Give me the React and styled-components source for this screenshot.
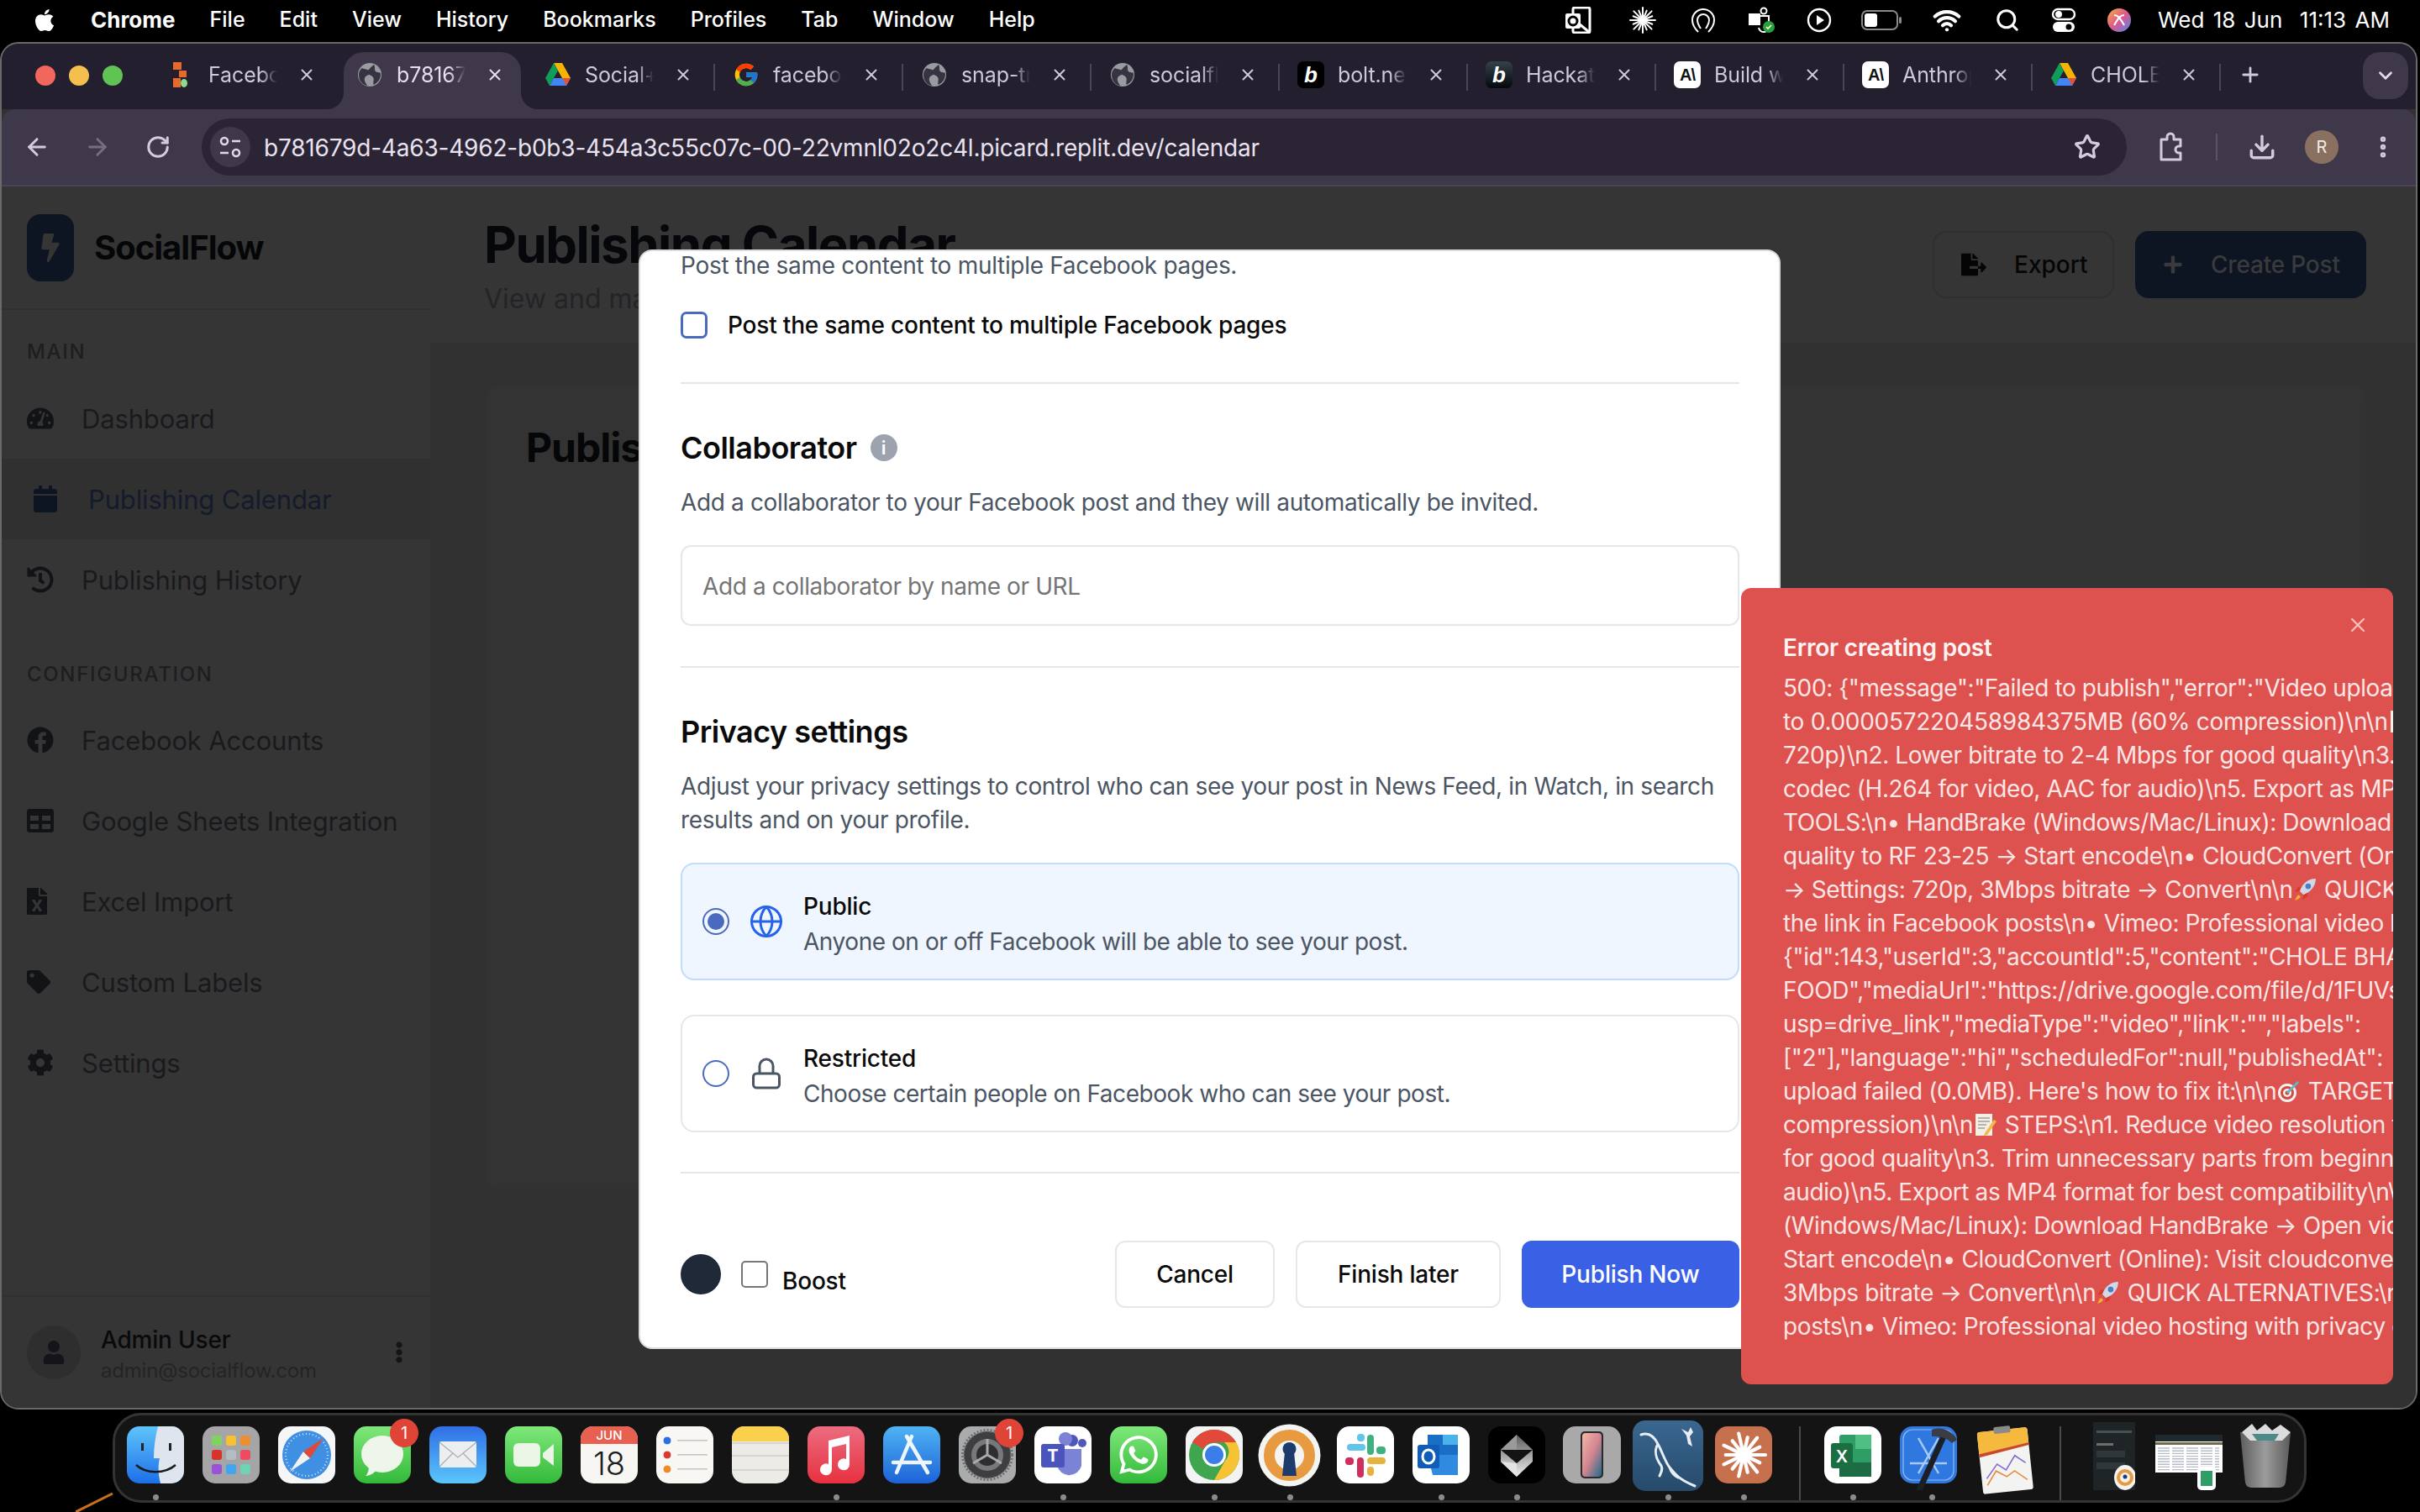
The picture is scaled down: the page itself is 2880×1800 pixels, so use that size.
import React from "react";
import styled, { createGlobalStyle } from "styled-components";
import {
  FaTachometerAlt, FaCalendar, FaHistory, FaFacebook, FaTable, FaFileExcel, FaTag, FaCog,
  FaUser, FaEllipsisV, FaFileExport, FaPlus, FaBolt, FaApple, FaWhatsapp,
} from "react-icons/fa";
import { FcGoogle } from "react-icons/fc";
import { Globe, X, Star, ArrowLeft, ArrowRight, RotateCw, EllipsisVertical, ChevronDown, Plus, Download, Search, Wifi } from "lucide-react";

const Global = createGlobalStyle`
  html, body { margin: 0; padding: 0; background: #000; }
  body { width: 2880px; height: 1800px; overflow: hidden; font-family: Inter, "Noto Sans", sans-serif; }
  * { box-sizing: border-box; }
`;

const Desktop = styled.div`
  position: relative; width: 2880px; height: 1800px; background: #000; display: flex; flex-direction: column; overflow: hidden;
`;

/* ---------- macOS menu bar ---------- */
const MenuBar = styled.div`
  height: 50px; flex: none; display: flex; align-items: center; padding: 0 37px 3px 38px; color: #fff; font-size: 25px; font-weight: 500;
`;
const AppleSlot = styled.div` width: 70px; flex: none; display: flex; align-items: center; `;
const MenuItems = styled.div` display: flex; gap: 41px; `;
const MenuItem = styled.span` font-weight: ${p => (p.$bold ? 700 : 500)}; font-size: ${p => (p.$bold ? 26 : 25)}px; white-space: nowrap; `;
const StatusArea = styled.div` margin-left: auto; display: flex; align-items: center; height: 100%; `;
const StatusCell = styled.div` width: ${p => p.$w}px; flex: none; display: flex; align-items: center; justify-content: center; `;
const Clock = styled.span` margin-left: 13px; width: 275px; white-space: pre; text-align: right; font-size: 26px; font-weight: 400; word-spacing: 3px; `;

/* ---------- Chrome window ---------- */
const Window = styled.div`
  position: relative; width: 2877px; height: 1628px; flex: none; border: 2px solid #6a6a6a; border-radius: 22px; overflow: hidden; background: #313131; display: flex; flex-direction: column;
`;
const TabStrip = styled.div` height: 78px; flex: none; background: #231f2f; display: flex; align-items: stretch; padding-left: 40px; `;
const Lights = styled.div` width: 135px; flex: none; display: flex; gap: 16px; padding-top: 26px; `;
const Light = styled.span` width: 24px; height: 24px; border-radius: 50%; background: ${p => p.$c}; `;
const TabCell = styled.div`
  position: relative; width: 224px; flex: none; display: flex; align-items: center; padding: 0 0 4px 23px; height: 78px; color: ${p => (p.$active ? "#e6e0ec" : "#cfc8d8")}; font-size: 25px; letter-spacing: -0.1px;
  &::before { content: ""; display: ${p => (p.$sep ? "block" : "none")}; position: absolute; left: 0; top: 24px; height: 32px; width: 2px; background: #4a4455; }
  ${p => p.$active && `
    &::after { content: ""; position: absolute; z-index: 0; left: 8px; right: 5px; top: 10px; bottom: 0; background: #3e384a; border-radius: 24px 24px 0 0; }
  `}
`;
const TabEnd = styled.span` width: 2px; height: 32px; margin-top: 24px; flex: none; background: #4a4455; `;
const TabFlare = styled.span`
  position: absolute; z-index: 0; bottom: 0; width: 20px; height: 20px; background: #3e384a;
  ${p => (p.$side === "left" ? "left: -12px;" : "right: -15px;")}
  &::after { content: ""; position: absolute; inset: 0; background: #231f2f; border-radius: ${p => (p.$side === "left" ? "0 0 20px 0" : "0 0 0 20px")}; }
`;
const Favicon = styled.span` position: relative; z-index: 1; width: 32px; height: 32px; flex: none; display: flex; align-items: center; justify-content: center; `;
const TabTitle = styled.span`
  position: relative; z-index: 1; margin-left: 16px; width: 82px; overflow: hidden; white-space: nowrap; flex: none;
  -webkit-mask-image: linear-gradient(to right, #000 76%, transparent 100%); mask-image: linear-gradient(to right, #000 76%, transparent 100%);
`;
const TabClose = styled.span` position: relative; z-index: 1; margin-left: 24px; width: 22px; display: flex; justify-content: center; `;
const BoltFav = styled.span`
  width: 32px; height: 32px; border-radius: 7px; background: ${p => p.$bg}; color: #fff; font: italic 800 26px/32px "Liberation Sans", sans-serif; text-align: center;
`;
const AnthFav = styled.span`
  width: 32px; height: 32px; border-radius: 7px; background: #fff; color: #111; font: 700 20px/32px "Liberation Sans", sans-serif; text-align: center; letter-spacing: -1px;
`;
const NewTab = styled.div` width: 70px; flex: none; display: flex; align-items: center; justify-content: center; color: #cfc8d8; padding-bottom: 4px; `;
const TabMenu = styled.div` margin: 10px 9px 0 auto; width: 54px; height: 56px; border-radius: 20px; background: #3e384a; display: flex; align-items: center; justify-content: center; color: #e0dae6; `;

const Toolbar = styled.div` height: 92px; flex: none; background: #3e384a; display: flex; align-items: center; padding-left: 6px; border-radius: 16px 16px 0 0; border-bottom: 2px solid #4a4455; `;
const ToolButton = styled.div` width: ${p => p.$w || 72}px; flex: none; display: flex; align-items: center; justify-content: center; color: ${p => (p.$dim ? "#746e7f" : "#d2cbdb")}; `;
const ToolDivider = styled.span` width: 2px; height: 32px; background: #5a5466; `;
const UrlBar = styled.div` margin: 0 17px 0 16px; width: 2291px; height: 68px; border-radius: 34px; background: #2a2434; display: flex; align-items: center; padding: 0 31px 0 10px; flex: none; `;
const SiteButton = styled.div` width: 48px; height: 48px; border-radius: 50%; background: #3e384a; display: flex; align-items: center; justify-content: center; color: #ded8e4; flex: none; `;
const UrlText = styled.span` margin-left: 16px; padding-top: 2px; color: #e9e2f0; font-size: 28px; letter-spacing: -0.2px; white-space: nowrap; flex: 1; `;
const ProfileDot = styled.span` width: 40px; height: 40px; border-radius: 50%; background: #8a7061; color: #f2ebe6; font-size: 20px; display: flex; align-items: center; justify-content: center; `;

/* ---------- dimmed page ---------- */
const Page = styled.div` flex: 1; min-height: 0; display: flex; `;
const Sidebar = styled.aside` width: 510px; flex: none; background: #353535; display: flex; flex-direction: column; `;
const Brand = styled.div` height: 147px; flex: none; display: flex; align-items: center; padding-left: 30px; gap: 24px; border-bottom: 2px solid #303030; `;
const LogoMark = styled.div` width: 56px; height: 80px; border-radius: 16px; background: #0d1522; display: flex; align-items: center; justify-content: center; color: #353535; `;
const BrandName = styled.span` font-size: 40px; font-weight: 700; letter-spacing: -1px; color: #050608; `;
const SectionLabel = styled.div` height: 34px; margin: ${p => p.$top}px 0 ${p => p.$bottom}px; padding-left: 30px; font-size: 24px; font-weight: 500; line-height: 34px; letter-spacing: 0.07em; color: #1d1e21; `;
const NavRow = styled.div`
  height: 96px; flex: none; display: flex; align-items: center; padding-left: ${p => (p.$active ? 38 : 30)}px; font-size: 31px; letter-spacing: -0.15px; color: ${p => (p.$active ? "#131b2c" : "#191a1d")}; background: ${p => (p.$active ? "#303030" : "transparent")};
`;
const NavIcon = styled.span` width: 65px; flex: none; display: flex; align-items: center; svg { margin-left: ${p => p.$shift || 0}px; } `;
const Profile = styled.div` margin-top: auto; height: 134px; border-top: 2px solid #303030; display: flex; align-items: center; padding: 0 24px 0 30px; `;
const ProfileAvatar = styled.div` width: 64px; height: 64px; border-radius: 50%; background: #2e2e2e; display: flex; align-items: center; justify-content: center; color: #141518; `;
const ProfileText = styled.div` margin: 5px 0 0 24px; flex: 1; display: flex; flex-direction: column; gap: 2px; `;
const ProfileName = styled.span` font-size: 28px; font-weight: 500; letter-spacing: -0.2px; color: #090a0c; line-height: 36px; `;
const ProfileMail = styled.span` font-size: 24px; letter-spacing: -0.2px; color: #232427; line-height: 34px; `;

const Main = styled.main` flex: 1; min-width: 0; background: #313131; display: flex; flex-direction: column; `;
const MainHeader = styled.header` height: 186px; flex: none; background: #353535; display: flex; align-items: center; justify-content: space-between; padding: 0 59px 0 64px; `;
const PageTitle = styled.h1` margin: 0; font-size: 60px; line-height: 72px; font-weight: 700; letter-spacing: -1.5px; color: #05070b; `;
const PageSub = styled.p` margin: 9px 0 0; font-size: 32px; line-height: 40px; color: #232428; `;
const HeaderActions = styled.div` display: flex; gap: 25px; `;
const ExportBtn = styled.div` width: 216px; height: 80px; border: 2px solid #2f2f2f; border-radius: 16px; display: flex; align-items: center; padding-left: 32px; gap: 33px; font-size: 28px; font-weight: 500; color: #050505; `;
const CreateBtn = styled.div` width: 275px; height: 80px; border-radius: 16px; background: #0d1522; display: flex; align-items: center; padding-left: 33px; gap: 33px; font-size: 28px; font-weight: 500; letter-spacing: -0.2px; color: #3a3a3c; `;
const Card = styled.section` margin: 50px 59px 0 66px; height: 959px; border-radius: 16px; background: #333; border: 2px solid #323232; padding: 44px 46px; `;
const CardTitle = styled.h2` margin: 0; font-size: 48px; line-height: 58px; font-weight: 700; letter-spacing: -1px; color: #050608; `;

/* ---------- modal ---------- */
const Modal = styled.div`
  position: absolute; left: 758px; top: 245px; width: 1359px; height: 1309px; background: #fff; border: 2px solid #dcdcdc; border-radius: 16px; overflow: hidden; padding: 0 47px 0 48px; color: #0a0a0a;
`;
const Lead = styled.p` margin: -3px 0 0; font-size: 28px; line-height: 40px; letter-spacing: -0.3px; color: #4b5563; `;
const CheckRow = styled.label` margin-top: 31px; height: 40px; display: flex; align-items: center; gap: 24px; font-size: 28px; font-weight: 500; letter-spacing: -0.2px; `;
const CheckBox = styled.span` width: 32px; height: 32px; flex: none; border: 3px solid #4a6abf; border-radius: 7px; `;
const Rule = styled.hr` margin: ${p => p.$top}px 0 0; border: 0; height: 2px; background: #e5e7eb; `;
const Heading = styled.h3` margin: 48px 0 0; display: flex; align-items: center; gap: 16px; font-size: 36px; line-height: 56px; font-weight: 600; letter-spacing: -0.5px; `;
const InfoDot = styled.span` width: 32px; height: 32px; border-radius: 50%; background: #9ca3af; color: #fff; font-size: 22px; font-weight: 600; line-height: 32px; text-align: center; letter-spacing: 0; `;
const Help = styled.p` margin: 17px 0 0; font-size: 28px; line-height: 40px; letter-spacing: -0.36px; color: #4b5563; `;
const TextInput = styled.div` margin-top: 31px; height: 96px; border: 2px solid #e5e7eb; border-radius: 12px; display: flex; align-items: center; padding: 2px 0 0 24px; font-size: 28px; letter-spacing: -0.39px; color: #757575; `;
const Choice = styled.div`
  margin-top: ${p => p.$top}px; height: 140px; border: 2px solid ${p => (p.$on ? "#bfdbfe" : "#e5e7eb")}; border-radius: 16px; background: ${p => (p.$on ? "#eff6ff" : "#fff")}; display: flex; align-items: center; padding-left: 24px;
`;
const Radio = styled.span`
  width: 32px; height: 32px; flex: none; border: 2.5px solid #4a6abf; border-radius: 50%; display: flex; align-items: center; justify-content: center;
  &::after { content: ""; display: ${p => (p.$on ? "block" : "none")}; width: 20px; height: 20px; border-radius: 50%; background: #4a6abf; }
`;
const ChoiceIcon = styled.span` width: 36px; margin: 0 26px 0 26px; flex: none; display: flex; justify-content: center; color: ${p => p.$c}; `;
const ChoiceText = styled.div` margin-top: 6px; display: flex; flex-direction: column; `;
const ChoiceTitle = styled.span` font-size: 28px; font-weight: 500; line-height: 42px; letter-spacing: -0.2px; `;
const ChoiceSub = styled.span` font-size: 28px; line-height: 42px; letter-spacing: -0.45px; color: #4b5563; `;
const Footer = styled.div` margin-top: 80px; display: flex; align-items: center; justify-content: space-between; `;
const FooterLeft = styled.div` display: flex; align-items: center; `;
const DarkDot = styled.span` width: 48px; height: 48px; border-radius: 50%; background: #1f2937; `;
const BoostBox = styled.span` margin-left: 24px; width: 32px; height: 32px; border: 2.5px solid #767676; border-radius: 5px; `;
const BoostLabel = styled.span` margin: 16px 0 0 17px; font-size: 28px; font-weight: 500; letter-spacing: -0.2px; `;
const FooterButtons = styled.div` display: flex; gap: 25px; `;
const Btn = styled.div`
  height: 80px; width: ${p => p.$w}px; border-radius: 12px; display: flex; align-items: center; justify-content: center; font-size: 28px; font-weight: 500; letter-spacing: -0.2px;
  border: 2px solid ${p => (p.$primary ? "#3a61e5" : "#e5e7eb")}; background: ${p => (p.$primary ? "#3a61e5" : "#fff")}; color: ${p => (p.$primary ? "#fff" : "#0a0a0a")};
`;

/* ---------- toast ---------- */
const Toast = styled.div`
  position: absolute; left: 2070px; top: 648px; width: 776px; height: 948px; border-radius: 12px; background: #dd524e; overflow: hidden; padding: 51px 0 0 50px; color: #fff;
`;
const ToastClose = styled.span` position: absolute; right: 28px; top: 30px; color: #f7bdbb; display: flex; `;
const ToastTitle = styled.div` font-size: 28px; line-height: 40px; font-weight: 600; letter-spacing: -0.2px; color: #fdf3f3; `;
const ToastBody = styled.div` margin-top: 8px; font-size: 28px; line-height: 40px; color: #fbe6e5; `;
const ToastLine = styled.div` white-space: pre; letter-spacing: ${p => p.$ls ?? -0.4}px; `;
const EmojiSlot = styled.svg` width: 28px; height: 28px; vertical-align: -4px; margin: 0 2px 0 0; `;

/* ---------- dock ---------- */
const DockZone = styled.div` flex: 1; position: relative; padding: 4px 0 0 134px; `;
const Streak = styled.svg` position: absolute; left: 90px; bottom: 0; `;
const Dock = styled.div`
  position: relative; width: 2611px; height: 107px; border: 3px solid #343434; border-radius: 34px; background: #141414; display: flex; align-items: flex-start; padding: 13px 0 0 14px;
`;
const DockItem = styled.div` position: relative; width: ${p => p.$w || 68}px; margin-right: ${p => p.$gap ?? 22}px; margin-top: ${p => p.$top || 0}px; flex: none; height: 68px; `;
const DockDot = styled.span` position: absolute; left: 50%; top: ${p => 81 - (p.$top || 0)}px; width: 7px; height: 7px; margin-left: -3px; border-radius: 50%; background: #8b8b8b; `;
const DockBadge = styled.span` position: absolute; right: -9px; top: -9px; width: 34px; height: 34px; border-radius: 50%; background: #e04436; color: #fff; font-size: 20px; display: flex; align-items: center; justify-content: center; `;
const DockSep = styled.span` flex: none; width: 2px; height: 88px; margin: 0 ${p => p.$r}px 0 ${p => p.$l}px; background: #4a4a4a; `;

const Ico = ({ children, w = 68, h = 68 }) => (
  <svg width={w} height={h} viewBox={`0 0 ${w} ${h}`} style={{ display: "block" }}>{children}</svg>
);

const rays = (cx, cy, r1, n, stroke, sw) =>
  Array.from({ length: n }, (_, i) => {
    const a = (i / n) * Math.PI * 2;
    const r = r1 * (i % 2 ? 0.82 : 1);
    return <line key={i} x1={cx} y1={cy} x2={cx + Math.cos(a) * r} y2={cy + Math.sin(a) * r} stroke={stroke} strokeWidth={sw} strokeLinecap="round" />;
  });

const GlobeFav = ({ c = "#989ca1" }) => (
  <svg width="30" height="30" viewBox="0 0 30 30"><circle cx="15" cy="15" r="14" fill={c} /><path d="M6 7c4 2 8 1 9 5s-5 3-6 7 2 6 3 9c-6-1-10-6-10-13 0-3 1-6 4-8zM20 3c2 3 0 6 2 8s5 0 6 3c0 6-3 10-8 13-2-3 1-6-1-9s-6-2-6-6 4-6 7-9z" fill="#2c2838" opacity=".9" /></svg>
);
const DriveFav = () => (
  <svg width="32" height="32" viewBox="0 0 32 32"><path d="M11 2h10l10 18h-10z" fill="#f4b400" /><path d="M11 2 1 20l5 9 10-18z" fill="#0f9d58" /><path d="M6 29h20l5-9H11z" fill="#4285f4" /><path d="M21 20l5 9 5-9z" fill="#e0503c" /></svg>
);
const ReplitFav = () => (
  <svg width="32" height="32" viewBox="0 0 32 32"><rect x="6" y="1" width="10" height="9" fill="#e8692c" /><rect x="13" y="11" width="9" height="8" fill="#e8692c" /><rect x="6" y="20" width="9" height="11" fill="#e8692c" /><ellipse cx="19" cy="26" rx="4" ry="5" fill="#8fd98a" /></svg>
);

const tabs = [
  { fav: <ReplitFav />, t: "Facebook Pages" },
  { fav: <GlobeFav />, t: "b781679d-4a63", active: true },
  { fav: <DriveFav />, t: "Social+ Drive" },
  { fav: <FcGoogle size={32} />, t: "facebook", sep: true },
  { fav: <GlobeFav />, t: "snap-transfer", sep: true },
  { fav: <GlobeFav />, t: "socialflow", sep: true },
  { fav: <BoltFav $bg="#000">b</BoltFav>, t: "bolt.new", sep: true },
  { fav: <BoltFav $bg="linear-gradient(#33424a,#05080c)">b</BoltFav>, t: "Hackathon", sep: true },
  { fav: <AnthFav>A\</AnthFav>, t: "Build with", sep: true },
  { fav: <AnthFav>A\</AnthFav>, t: "Anthropic", sep: true },
  { fav: <DriveFav />, t: "CHOLE BH", sep: true },
];

const Rocket = () => (
  <EmojiSlot viewBox="2 1 25 25"><path d="M26 2c-8 0-14 5-17 13l4 4c8-3 13-9 13-17z" fill="#cfd8e4" /><circle cx="18" cy="10" r="3" fill="#4a7fc4" /><path d="M9 15l-5 1 3-5 4-1zM13 19l-1 5 5-3 1-4z" fill="#d83a2c" /><path d="M8 19c-2 1-3 3-4 6 3-1 5-2 6-4z" fill="#f5b02e" /></EmojiSlot>
);
const Target = () => (
  <EmojiSlot viewBox="0 0 28 28"><circle cx="13" cy="16" r="11" fill="#f2f2f2" /><circle cx="13" cy="16" r="8" fill="#d6473c" /><circle cx="13" cy="16" r="5" fill="#f2f2f2" /><circle cx="13" cy="16" r="2.5" fill="#d6473c" /><path d="M13 16 26 3" stroke="#5fb6c9" strokeWidth="3" /></EmojiSlot>
);
const Memo = () => (
  <EmojiSlot viewBox="0 0 28 28"><rect x="3" y="1" width="20" height="26" fill="#f2efe6" /><path d="M6 6h14M6 10h14M6 14h10M6 18h8" stroke="#a5a096" strokeWidth="1.5" /><path d="M14 24 25 8l3 2-11 16-4 1z" fill="#f4b942" /></EmojiSlot>
);

const L = ToastLine;
const ToastLines = () => (
  <ToastBody>
    <L>{'500: {"message":"Failed to publish","error":"Video upload failed'}</L>
    <L $ls={-0.28}>{'to 0.000057220458984375MB (60% compression)\\n\\n'}<Memo /></L>
    <L>{'720p)\\n2. Lower bitrate to 2-4 Mbps for good quality\\n3. Trim'}</L>
    <L>{'codec (H.264 for video, AAC for audio)\\n5. Export as MP4 format'}</L>
    <L>{'TOOLS:\\n• HandBrake (Windows/Mac/Linux): Download HandBrake'}</L>
    <L>{'quality to RF 23-25 → Start encode\\n• CloudConvert (Online): Visit'}</L>
    <L>{'→ Settings: 720p, 3Mbps bitrate → Convert\\n\\n'}<Rocket />{' QUICK ALTERNATIVES'}</L>
    <L>{'the link in Facebook posts\\n• Vimeo: Professional video hosting'}</L>
    <L>{'{"id":143,"userId":3,"accountId":5,"content":"CHOLE BHATURE'}</L>
    <L>{'FOOD","mediaUrl":"https://drive.google.com/file/d/1FUVs'}</L>
    <L>{'usp=drive_link","mediaType":"video","link":"","labels":'}</L>
    <L>{'["2"],"language":"hi","scheduledFor":null,"publishedAt":'}</L>
    <L>{"upload failed (0.0MB). Here's how to fix it:\\n\\n"}<Target />{' TARGET: Compress'}</L>
    <L>{'compression)\\n\\n'}<Memo />{' STEPS:\\n1. Reduce video resolution to'}</L>
    <L>{'for good quality\\n3. Trim unnecessary parts from beginning'}</L>
    <L>{'audio)\\n5. Export as MP4 format for best compatibility\\n\\nTOOLS'}</L>
    <L>{'(Windows/Mac/Linux): Download HandBrake → Open video'}</L>
    <L>{'Start encode\\n• CloudConvert (Online): Visit cloudconvert.com'}</L>
    <L>{'3Mbps bitrate → Convert\\n\\n'}<Rocket />{' QUICK ALTERNATIVES:\\n• YouTube'}</L>
    <L>{'posts\\n• Vimeo: Professional video hosting with privacy controls'}</L>
  </ToastBody>
);

const dockLeft = [
  { key: "finder", dot: true, icon: <Ico><defs><linearGradient id="fb" x1="0" y1="0" x2="0" y2="1"><stop offset="0" stopColor="#5fc4fb" /><stop offset="1" stopColor="#1c6fe8" /></linearGradient></defs><rect width="68" height="68" rx="15" fill="url(#fb)" /><path d="M37 0h16a15 15 0 0 1 15 15v38a15 15 0 0 1-15 15H40c-3-12-3-22-1-30h-7c0-14 2-26 5-38z" fill="#dfe5ee" /><rect x="17" y="20" width="3" height="9" fill="#222" /><rect x="50" y="20" width="3" height="9" fill="#222" /><path d="M11 46c12 11 34 11 47 0" stroke="#1a1a1a" strokeWidth="2.5" fill="none" /></Ico> },
  { key: "launch", icon: <Ico><rect width="68" height="68" rx="15" fill="#a5a5a7" />{[["#7fd45d","#f8c131","#ec8f32"],["#d8332a","#b3bcc0","#ee4a60"],["#9a52d6","#41a6f0","#6fd2b7"]].map((row, r) => row.map((c, i) => <rect key={r + "-" + i} x={11 + i * 17} y={11 + r * 17} width="12" height="12" rx="3" fill={c} />))}</Ico> },
  { key: "safari", icon: <Ico><rect width="68" height="68" rx="15" fill="#f5f6f7" /><circle cx="34" cy="34" r="29" fill="#3f8fe3" /><circle cx="34" cy="34" r="25" fill="none" stroke="#d6e8fa" strokeWidth="2" strokeDasharray="1 3" /><path d="M14 54 30 30l8 8z" fill="#f2f2f2" /><path d="M54 14 30 30l8 8z" fill="#e0483c" /></Ico> },
  { key: "messages", badge: true, icon: <Ico><defs><linearGradient id="gm" x1="0" y1="0" x2="0" y2="1"><stop offset="0" stopColor="#7fe87a" /><stop offset="1" stopColor="#33b93a" /></linearGradient></defs><rect width="68" height="68" rx="15" fill="url(#gm)" /><ellipse cx="34" cy="33" rx="25" ry="22" fill="#eef5ea" /><path d="M18 48c0 5-2 9-4 11 5 0 10-3 13-7z" fill="#eef5ea" /></Ico> },
  { key: "mail", icon: <Ico><defs><linearGradient id="gb" x1="0" y1="0" x2="0" y2="1"><stop offset="0" stopColor="#2f6fe6" /><stop offset="1" stopColor="#5bc6fb" /></linearGradient></defs><rect width="68" height="68" rx="15" fill="url(#gb)" /><rect x="12" y="18" width="44" height="31" rx="2" fill="#eceef0" /><path d="M12 19 34 37 56 19M12 48 28 32M56 48 40 32" stroke="#a9afb6" strokeWidth="1.2" fill="none" /></Ico> },
  { key: "facetime", icon: <Ico><rect width="68" height="68" rx="15" fill="url(#gm)" /><rect x="10" y="20" width="32" height="28" rx="6" fill="#eaf5e6" /><path d="M45 32 58 21v26L45 37z" fill="#eaf5e6" /></Ico> },
  { key: "calendar", icon: <Ico><rect width="68" height="68" rx="15" fill="#f7f6f3" /><path d="M0 21V15A15 15 0 0 1 15 0h38a15 15 0 0 1 15 15v6z" fill="#e8604f" /><text x="34" y="16" fontSize="15" fill="#fff" textAnchor="middle" fontFamily="Inter" fontWeight="500">JUN</text><text x="34" y="58" fontSize="38" fill="#1d1d1d" textAnchor="middle" fontFamily="Inter" fontWeight="300">18</text></Ico> },
  { key: "reminders", icon: <Ico><rect width="68" height="68" rx="15" fill="#f8f7f4" />{[["#2c6fe0", 17], ["#d93a30", 34], ["#ee8a2a", 51]].map(([c, y]) => <g key={y}><circle cx="13" cy={y} r="5" fill={c} stroke="#fff" strokeWidth="1" /><rect x="25" y={y - 1} width="36" height="1.6" fill="#c7c7c7" /></g>)}</Ico> },
  { key: "notes", icon: <Ico><rect width="68" height="68" rx="15" fill="#ecebe6" /><path d="M0 18V15A15 15 0 0 1 15 0h38a15 15 0 0 1 15 15v3z" fill="#fbd04c" /><path d="M0 20h68M0 35h68M0 52h68" stroke="#cfcec8" strokeWidth="1.4" /></Ico> },
  { key: "music", dot: true, icon: <Ico><defs><linearGradient id="gr" x1="0" y1="0" x2="0" y2="1"><stop offset="0" stopColor="#ec6c80" /><stop offset="1" stopColor="#e7313f" /></linearGradient></defs><rect width="68" height="68" rx="15" fill="url(#gr)" /><path d="M25 17 50 11v34a7 7 0 1 1-4-6V21l-17 4v26a7 7 0 1 1-4-6z" fill="#fff" /></Ico> },
  { key: "appstore", icon: <Ico><defs><linearGradient id="ga" x1="0" y1="0" x2="0" y2="1"><stop offset="0" stopColor="#4fb3f4" /><stop offset="1" stopColor="#1d63d8" /></linearGradient></defs><rect width="68" height="68" rx="15" fill="url(#ga)" /><path d="M34 12 16 55M28 12l25 43M12 43h44" stroke="#eef6fd" strokeWidth="4.5" strokeLinecap="round" fill="none" /></Ico> },
  { key: "settings", badge: true, icon: <Ico><rect width="68" height="68" rx="15" fill="#a9abad" /><circle cx="34" cy="34" r="28" fill="#3e3e40" /><circle cx="34" cy="34" r="29" fill="none" stroke="#6f7072" strokeWidth="4" strokeDasharray="2 2" /><circle cx="34" cy="34" r="19" fill="#77787b" /><circle cx="34" cy="34" r="13" fill="#2e2e30" /><path d="M34 34V15M34 34 17 44M34 34l17 10" stroke="#a9aaad" strokeWidth="3" /></Ico> },
  { key: "teams", dot: true, icon: <Ico><rect width="68" height="68" rx="15" fill="#fff" /><circle cx="45" cy="17" r="7" fill="#4f58b7" /><circle cx="57" cy="20" r="5" fill="#4f58b7" /><path d="M27 27h29v20a15 15 0 0 1-29 0z" fill="#7b83d6" /><circle cx="37" cy="15" r="8" fill="#7b83d6" /><rect x="8" y="21" width="28" height="28" rx="3" fill="#4b53bc" /><text x="22" y="42" fontSize="20" fontWeight="700" fontFamily="Inter" fill="#fff" textAnchor="middle">T</text></Ico> },
  { key: "whatsapp", icon: <Ico><rect width="68" height="68" rx="15" fill="url(#gm)" /><foreignObject x="8" y="8" width="52" height="52"><FaWhatsapp size={52} color="#fff" /></foreignObject></Ico> },
  { key: "chrome", dot: true, gap: 18, icon: <Ico><rect width="68" height="68" rx="15" fill="#f3f3f3" /><circle cx="34" cy="34" r="30" fill="#3fa64f" /><path d="M34 4a30 30 0 0 1 26 15H34a15 15 0 0 0-13 8L8 19A30 30 0 0 1 34 4z" fill="#e2493b" /><path d="M60 19a30 30 0 0 1-26 45l13-23a15 15 0 0 0-1-22z" fill="#f7c234" /><circle cx="34" cy="34" r="14" fill="#fff" /><circle cx="34" cy="34" r="11" fill="#3c7ee8" /></Ico> },
];

const dockRight = [
  { key: "vpn", dot: true, w: 75, gap: 19, top: -3, icon: <Ico w={75} h={75}><circle cx="37.5" cy="37.5" r="37" fill="#f4f4f2" /><circle cx="37.5" cy="37.5" r="24" fill="none" stroke="#e79a3f" strokeWidth="13" /><circle cx="37.5" cy="30" r="8" fill="#1e3b6e" /><path d="M32 34h11l3 28H29z" fill="#1e3b6e" /></Ico> },
  { key: "slack", icon: <Ico><rect width="68" height="68" rx="15" fill="#fff" /><rect x="36" y="10" width="8" height="24" rx="4" fill="#3fb07f" /><rect x="47" y="24" width="11" height="9" rx="4" fill="#3fb07f" /><rect x="12" y="21" width="22" height="8" rx="4" fill="#62c4e9" /><rect x="24" y="9" width="9" height="9" rx="4" fill="#62c4e9" /><rect x="24" y="37" width="8" height="24" rx="4" fill="#d12e5e" /><rect x="10" y="37" width="10" height="9" rx="4" fill="#d12e5e" /><rect x="36" y="37" width="22" height="8" rx="4" fill="#e7b33e" /><rect x="36" y="48" width="8" height="11" rx="4" fill="#e7b33e" /></Ico> },
  { key: "outlook", dot: true, icon: <Ico><rect width="68" height="68" rx="15" fill="#fff" /><rect x="18" y="10" width="36" height="24" fill="#1b6ec5" /><rect x="36" y="10" width="18" height="12" fill="#49b3ea" /><path d="M18 34h36v24H24z" fill="#2f8ae0" /><rect x="6" y="22" width="26" height="28" rx="3" fill="#0f5db8" /><ellipse cx="19" cy="36" rx="7" ry="8" fill="none" stroke="#fff" strokeWidth="3" /></Ico> },
  { key: "black", dot: true, gap: 21, icon: <Ico><defs><linearGradient id="bk" x1="0" y1="0" x2="0" y2="1"><stop offset="0" stopColor="#5c5c5c" /><stop offset="1" stopColor="#efefef" /></linearGradient></defs><rect width="68" height="68" rx="15" fill="#000" /><path d="M34 10 53 28v14L34 60 15 42V28z" fill="url(#bk)" /><path d="M15 28 34 44 53 28H34z" fill="#141414" /><path d="M34 44v16L15 42z" fill="#e4e4e4" /><path d="M34 10v18H15z" fill="#9a9a9a" /></Ico> },
  { key: "mirror", w: 69, gap: 14, icon: <Ico w={69}><defs><linearGradient id="ph" x1="0" y1="0" x2="1" y2="1"><stop offset="0" stopColor="#f2b8a8" /><stop offset=".5" stopColor="#d48590" /><stop offset="1" stopColor="#1d6a8c" /></linearGradient></defs><rect width="69" height="68" rx="15" fill="#a9a9a9" /><rect x="21" y="6" width="27" height="56" rx="5" fill="#2a2a2a" /><rect x="23" y="8" width="23" height="52" rx="4" fill="url(#ph)" /></Ico> },
  { key: "mysql", dot: true, w: 84, gap: 14, top: -7, icon: <Ico w={84} h={84}><defs><linearGradient id="my" x1="0" y1="0" x2="0" y2="1"><stop offset="0" stopColor="#3a6790" /><stop offset="1" stopColor="#264a6b" /></linearGradient></defs><rect width="84" height="84" rx="15" fill="url(#my)" /><path d="M10 17c8-3 15 1 20 11 6 11 8 20 14 28 6 7 10 14 30 22M30 28c-5 8-2 18 4 26 2 4 0 8-2 12M44 56c2 6 6 10 10 12" fill="none" stroke="#e8eef3" strokeWidth="3" strokeLinecap="round" /><path d="M58 10l6 8 2 10 5 3-3-12 4-5-3-6-3 6z" fill="#e8eef3" /></Ico> },
  { key: "claude", dot: true, gap: 0, icon: <Ico><rect width="68" height="68" rx="15" fill="#c6704d" />{rays(34, 34, 26, 14, "#fff", 4.2)}</Ico> },
];
const dockTools = [
  { key: "excel", dot: true, icon: <Ico><rect width="68" height="68" rx="15" fill="#fff" /><rect x="18" y="10" width="38" height="50" rx="3" fill="#2f9e66" /><rect x="37" y="10" width="19" height="17" fill="#4fbf84" /><rect x="18" y="43" width="38" height="17" fill="#1d6b44" /><rect x="8" y="20" width="26" height="30" rx="3" fill="#1a6e42" /><text x="21" y="43" fontSize="20" fontWeight="600" fontFamily="Inter" fill="#fff" textAnchor="middle">X</text></Ico> },
  { key: "xcode", dot: true, w: 76, gap: 11, icon: <Ico w={76} h={76}><rect width="68" height="68" rx="15" fill="#2f78e0" /><rect x="4" y="4" width="60" height="60" rx="11" fill="none" stroke="#8fbaf2" strokeWidth="1.2" /><path d="M22 14 46 56M46 14 22 56M12 44h44" stroke="#a8c9f5" strokeWidth="2.5" fill="none" /><path d="M24 74 52 12" stroke="#1c1f26" strokeWidth="7" strokeLinecap="round" /><path d="M38 4c10-4 24 0 30 12l-6 4c-6-6-12-8-24-8z" fill="#3a3d44" /></Ico> },
  { key: "instruments", w: 76, gap: 0, top: -2, icon: <Ico w={76} h={84}><g transform="rotate(-6 38 40)"><rect x="8" y="6" width="60" height="74" rx="3" fill="#f3f3f1" /><path d="M8 9a3 3 0 0 1 3-3h54a3 3 0 0 1 3 3v15L8 32z" fill="#f5b93e" /><path d="M8 32 68 24v3L8 36z" fill="#c94a26" /><rect x="28" y="2" width="20" height="8" rx="2" fill="#8a8a8a" /><path d="M14 62 28 46l10 8 12-16 12 10" stroke="#8a6ad6" strokeWidth="1.6" fill="none" /><path d="M14 70 26 54l12 8 10-6 14 12" stroke="#e68a3a" strokeWidth="1.6" fill="none" /></g></Ico> },
];
const dockStacks = [
  { key: "docA", w: 50, gap: 24, top: -5, icon: <Ico w={50} h={81}><rect width="50" height="81" fill="#1f2526" /><rect x="4" y="10" width="42" height="3" fill="#4a5153" /><rect x="4" y="25" width="20" height="3" fill="#6a6f70" /><rect x="4" y="34" width="34" height="8" fill="#2f3739" /><rect x="4" y="48" width="34" height="8" fill="#2f3739" /><ellipse cx="38" cy="66" rx="13" ry="15" fill="#f3f3f1" /><circle cx="38" cy="66" r="8" fill="none" stroke="#e79a3f" strokeWidth="4" /><circle cx="38" cy="65" r="2.5" fill="#1e3b6e" /></Ico> },
  { key: "docB", w: 80, gap: 19, top: 10, icon: <Ico w={80} h={66}><rect width="80" height="45" y="0" fill="#fff" /><rect width="80" height="8" fill="#1e2a2e" /><rect y="9" width="80" height="3" fill="#6f6a4c" /><g stroke="#b7bcc9" strokeWidth="1.4">{Array.from({ length: 9 }, (_, i) => <line key={i} x1="3" x2="76" y1={16 + i * 3.2} y2={16 + i * 3.2} strokeDasharray="14 3" />)}</g><rect x="50" y="38" width="22" height="28" rx="5" fill="#fff" /><rect x="54" y="43" width="14" height="18" fill="#2f9e66" /></Ico> },
  { key: "trash", w: 64, gap: 0, top: -5, icon: <Ico w={64} h={78}><defs><linearGradient id="tr" x1="0" y1="0" x2="1" y2="0"><stop offset="0" stopColor="#5e5e5e" /><stop offset=".5" stopColor="#9c9c9c" /><stop offset="1" stopColor="#5a5a5a" /></linearGradient></defs><path d="M2 12h60l-6 60a8 8 0 0 1-8 6H16a8 8 0 0 1-8-6z" fill="url(#tr)" /><path d="M4 12 16 2l6 8 10-8 8 8 10-7 12 9-10 10H14z" fill="#dcdcdc" /><path d="M16 14h32l-5 8H22z" fill="#4d8a8a" /></Ico> },
];

const renderDock = items => items.map(i => (
  <DockItem key={i.key} $w={i.w} $gap={i.gap} $top={i.top}>
    {i.icon}
    {i.badge && <DockBadge>1</DockBadge>}
    {i.dot && <DockDot $top={i.top} />}
  </DockItem>
));

export default function App() {
  return (
    <Desktop>
      <Global />
      <MenuBar>
        <AppleSlot><FaApple size={30} /></AppleSlot>
        <MenuItems>
          <MenuItem $bold>Chrome</MenuItem>
          {["File", "Edit", "View", "History", "Bookmarks", "Profiles", "Tab", "Window", "Help"].map(m => <MenuItem key={m}>{m}</MenuItem>)}
        </MenuItems>
        <StatusArea>
          <StatusCell $w={78}>
            <svg width="32" height="32" viewBox="0 0 32 32"><rect x="10" y="1" width="20" height="30" rx="2" fill="none" stroke="#fff" strokeWidth="3" /><rect x="1" y="8" width="18" height="18" rx="2" fill="#fff" /><circle cx="10" cy="17" r="5" fill="none" stroke="#000" strokeWidth="3" /><path d="M18 21l11 9" stroke="#fff" strokeWidth="3" /></svg>
          </StatusCell>
          <StatusCell $w={75}><svg width="32" height="32" viewBox="0 0 32 32">{rays(16, 16, 15, 16, "#fff", 2)}</svg></StatusCell>
          <StatusCell $w={70}><svg width="32" height="32" viewBox="0 0 32 32"><path d="M10 30c-3-3-7-7-7-14a13 13 0 0 1 26 0c0 7-4 11-7 14M13 26c-2-3-4-6-4-10a7 7 0 0 1 14 0c0 4-2 7-4 10" fill="none" stroke="#fff" strokeWidth="2" /></svg></StatusCell>
          <StatusCell $w={68}><svg width="34" height="32" viewBox="0 0 34 32"><circle cx="20" cy="5" r="3.5" fill="none" stroke="#fff" strokeWidth="2" /><rect x="2" y="8" width="14" height="14" fill="#fff" /><path d="M16 11h10v12a6 6 0 0 1-12 2" fill="none" stroke="#fff" strokeWidth="2" /><circle cx="26" cy="24" r="7" fill="#2aa23b" /><path d="M23 24l2 2 4-4" stroke="#fff" strokeWidth="1.6" fill="none" /></svg></StatusCell>
          <StatusCell $w={70}><svg width="30" height="30" viewBox="0 0 30 30"><circle cx="15" cy="15" r="13" fill="none" stroke="#fff" strokeWidth="2.4" /><path d="M12 9l9 6-9 6z" fill="#fff" /></svg></StatusCell>
          <StatusCell $w={78}><svg width="48" height="24" viewBox="0 0 48 24"><rect x="1" y="1" width="42" height="22" rx="6" fill="none" stroke="#8a8a8a" strokeWidth="2" /><rect x="4" y="4" width="15" height="16" rx="3" fill="#fff" /><rect x="45" y="8" width="3" height="8" rx="1.5" fill="#8a8a8a" /></svg></StatusCell>
          <StatusCell $w={77}><Wifi size={34} color="#fff" strokeWidth={3} /></StatusCell>
          <StatusCell $w={68}><Search size={30} color="#fff" strokeWidth={2.4} /></StatusCell>
          <StatusCell $w={66}><svg width="30" height="30" viewBox="0 0 30 30"><rect x="2" y="2" width="26" height="12" rx="6" fill="none" stroke="#fff" strokeWidth="2.4" /><circle cx="9" cy="8" r="4" fill="#fff" /><rect x="2" y="17" width="26" height="12" rx="6" fill="#fff" /><circle cx="21" cy="23" r="3.5" fill="#000" /></svg></StatusCell>
          <StatusCell $w={66}><svg width="30" height="30" viewBox="0 0 30 30"><defs><linearGradient id="si" x1="0" y1="0" x2="1" y2="1"><stop offset="0" stopColor="#f5b23a" /><stop offset=".5" stopColor="#e0578e" /><stop offset="1" stopColor="#4a8bf0" /></linearGradient></defs><circle cx="15" cy="15" r="14" fill="url(#si)" /><path d="M9 9c6 0 8 6 12 12M21 9c-6 0-8 6-12 12" stroke="#fff" strokeWidth="2.2" fill="none" /></svg></StatusCell>
          <Clock>{"Wed 18 Jun  11:13 AM"}</Clock>
        </StatusArea>
      </MenuBar>

      <Window>
        <TabStrip>
          <Lights>
            <Light $c="#f2675d" /><Light $c="#f4bf4f" /><Light $c="#5fc454" />
          </Lights>
          {tabs.map(t => (
            <TabCell key={t.t} $active={t.active} $sep={t.sep}>
              {t.active && <TabFlare $side="left" />}
              {t.active && <TabFlare $side="right" />}
              <Favicon>{t.fav}</Favicon>
              <TabTitle>{t.t}</TabTitle>
              <TabClose><X size={22} strokeWidth={2.2} /></TabClose>
            </TabCell>
          ))}
          <TabEnd />
          <NewTab><Plus size={28} strokeWidth={2.4} /></NewTab>
          <TabMenu><ChevronDown size={26} strokeWidth={2.6} /></TabMenu>
        </TabStrip>
        <Toolbar>
          <ToolButton><ArrowLeft size={32} strokeWidth={2.2} /></ToolButton>
          <ToolButton $dim><ArrowRight size={32} strokeWidth={2.2} /></ToolButton>
          <ToolButton><RotateCw size={30} strokeWidth={2.4} /></ToolButton>
          <UrlBar>
            <SiteButton>
              <svg width="28" height="30" viewBox="0 0 28 30" fill="none" stroke="currentColor" strokeWidth="2.6"><circle cx="7" cy="8" r="4" /><path d="M16 8h10M2 22h10" /><circle cx="21" cy="22" r="4" /></svg>
            </SiteButton>
            <UrlText>b781679d-4a63-4962-b0b3-454a3c55c07c-00-22vmnl02o2c4l.picard.replit.dev/calendar</UrlText>
            <Star size={32} color="#d2cbdb" strokeWidth={2.4} />
          </UrlBar>
          <ToolButton>
            <svg width="36" height="36" viewBox="0 0 36 36" fill="none" stroke="currentColor" strokeWidth="3" strokeLinejoin="round"><path d="M6 9h7V6a4 4 0 0 1 8 0v3h8v8h-2a4 4 0 0 0 0 8h2v8H6z" /></svg>
          </ToolButton>
          <ToolButton $w={36}><ToolDivider /></ToolButton>
          <ToolButton><Download size={34} strokeWidth={2.4} /></ToolButton>
          <ToolButton $w={70}><ProfileDot>R</ProfileDot></ToolButton>
          <ToolButton $w={76}><EllipsisVertical size={32} strokeWidth={2.8} /></ToolButton>
        </Toolbar>

        <Page>
          <Sidebar>
            <Brand>
              <LogoMark><FaBolt size={34} /></LogoMark>
              <BrandName>SocialFlow</BrandName>
            </Brand>
            <SectionLabel $top={33} $bottom={14}>MAIN</SectionLabel>
            <NavRow><NavIcon><FaTachometerAlt size={32} color="#121317" /></NavIcon>Dashboard</NavRow>
            <NavRow $active><NavIcon $shift={-2}><FaCalendar size={32} color="#0d1522" /></NavIcon>Publishing Calendar</NavRow>
            <NavRow><NavIcon><FaHistory size={32} color="#121317" /></NavIcon>Publishing History</NavRow>
            <SectionLabel $top={48} $bottom={13}>CONFIGURATION</SectionLabel>
            <NavRow><NavIcon><FaFacebook size={32} color="#121317" /></NavIcon>Facebook Accounts</NavRow>
            <NavRow><NavIcon><FaTable size={32} color="#121317" /></NavIcon>Google Sheets Integration</NavRow>
            <NavRow><NavIcon $shift={-4}><FaFileExcel size={32} color="#121317" /></NavIcon>Excel Import</NavRow>
            <NavRow><NavIcon><FaTag size={28} color="#121317" /></NavIcon>Custom Labels</NavRow>
            <NavRow><NavIcon><FaCog size={32} color="#121317" /></NavIcon>Settings</NavRow>
            <Profile>
              <ProfileAvatar><FaUser size={28} /></ProfileAvatar>
              <ProfileText>
                <ProfileName>Admin User</ProfileName>
                <ProfileMail>admin@socialflow.com</ProfileMail>
              </ProfileText>
              <FaEllipsisV size={26} color="#141518" />
            </Profile>
          </Sidebar>
          <Main>
            <MainHeader>
              <div>
                <PageTitle>Publishing Calendar</PageTitle>
                <PageSub>View and manage your scheduled content</PageSub>
              </div>
              <HeaderActions>
                <ExportBtn><FaFileExport size={30} />Export</ExportBtn>
                <CreateBtn><FaPlus size={24} />Create Post</CreateBtn>
              </HeaderActions>
            </MainHeader>
            <Card><CardTitle>Publishing Calendar</CardTitle></Card>
          </Main>
        </Page>

        <Modal>
          <Lead>Post the same content to multiple Facebook pages.</Lead>
          <CheckRow><CheckBox />Post the same content to multiple Facebook pages</CheckRow>
          <Rule $top={48} />
          <Heading>Collaborator<InfoDot>i</InfoDot></Heading>
          <Help>Add a collaborator to your Facebook post and they will automatically be invited.</Help>
          <TextInput>Add a collaborator by name or URL</TextInput>
          <Rule $top={48} />
          <Heading>Privacy settings</Heading>
          <Help>Adjust your privacy settings to control who can see your post in News Feed, in Watch, in search results and on your profile.</Help>
          <Choice $on $top={31}>
            <Radio $on />
            <ChoiceIcon $c="#2563eb"><Globe size={42} strokeWidth={1.7} style={{ margin: "-3px" }} /></ChoiceIcon>
            <ChoiceText><ChoiceTitle>Public</ChoiceTitle><ChoiceSub>Anyone on or off Facebook will be able to see your post.</ChoiceSub></ChoiceText>
          </Choice>
          <Choice $top={41}>
            <Radio />
            <ChoiceIcon $c="#4b5563">
              <svg width="36" height="38" viewBox="0 0 36 38" fill="none" stroke="currentColor" strokeWidth="3"><path d="M10 19v-9a8 8 0 0 1 16 0v9" /><rect x="2.5" y="19" width="31" height="17" rx="4" /></svg>
            </ChoiceIcon>
            <ChoiceText><ChoiceTitle>Restricted</ChoiceTitle><ChoiceSub>Choose certain people on Facebook who can see your post.</ChoiceSub></ChoiceText>
          </Choice>
          <Rule $top={47} />
          <Footer>
            <FooterLeft><DarkDot /><BoostBox /><BoostLabel>Boost</BoostLabel></FooterLeft>
            <FooterButtons>
              <Btn $w={190}>Cancel</Btn>
              <Btn $w={244}>Finish later</Btn>
              <Btn $w={259} $primary>Publish Now</Btn>
            </FooterButtons>
          </Footer>
        </Modal>

        <Toast>
          <ToastClose><X size={28} strokeWidth={2} /></ToastClose>
          <ToastTitle>Error creating post</ToastTitle>
          <ToastLines />
        </Toast>
      </Window>

      <DockZone>
        <Streak width="50" height="24" viewBox="0 0 50 24"><path d="M0 24 44 2" stroke="#c8701f" strokeWidth="3" /></Streak>
        <Dock>
          {renderDock(dockLeft)}
          {renderDock(dockRight)}
          <DockSep $l={32} $r={28} />
          {renderDock(dockTools)}
          <DockSep $l={27} $r={38} />
          {renderDock(dockStacks)}
        </Dock>
      </DockZone>
    </Desktop>
  );
}
